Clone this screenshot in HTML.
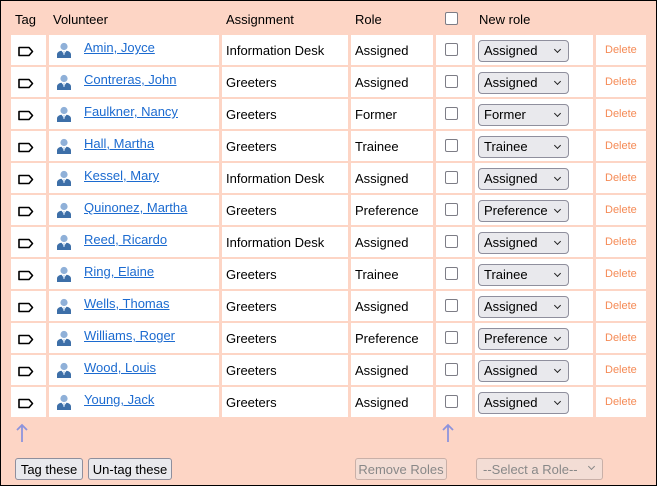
<!DOCTYPE html>
<html><head><style>
html,body{margin:0;padding:0}
body{width:655px;height:484px;border:1px solid #000;background:#fdd5c5;font-family:"Liberation Sans",Arial,sans-serif;font-size:13px;color:#000;position:relative;overflow:hidden}
table{position:absolute;left:7px;top:2px;border-collapse:separate;border-spacing:3px 2px;table-layout:fixed}
th{font-weight:normal;text-align:left;height:28px;padding:0 0 0 4px;vertical-align:middle}
td{background:#fff;height:30px;padding:0 0 0 4px;vertical-align:middle;white-space:nowrap}
a{color:#1c6bd0;text-decoration:underline}
.tag{display:block;margin-left:3px;margin-top:3px}
.vol{position:relative}
.vol svg{position:absolute;left:7px;top:7px}
.vol a{position:absolute;left:35px;top:5px}
.cb{display:inline-block;width:11px;height:11px;border:1.5px solid #7d7d86;border-radius:2px;background:#fff;margin-left:5px;margin-top:2px}
.sel{display:inline-block;box-sizing:border-box;width:91px;height:22px;border:1px solid #8f8f9d;border-radius:4px;background:#e9e9ed;padding:2px 0 0 5px;position:relative;margin-left:-1px;margin-top:2px}
.sel:after{content:"";position:absolute;right:8px;top:6px;width:4px;height:4px;border-right:1.5px solid #222;border-bottom:1.5px solid #222;transform:rotate(45deg)}
.del{color:#f58a55;font-size:11px;padding-left:9px}
.btn{position:absolute;box-sizing:border-box;height:22px;border:1px solid #8f8f9d;border-radius:3px;background:#e9e9ed;font-size:13px;padding:3px 0 0;white-space:nowrap;text-align:center}
.dis{color:#888;border-color:#c9b0a8;background:#f3ddd5}
.arr{position:absolute;top:422px}
</style></head><body>
<table>
<colgroup><col style="width:35px"><col style="width:170px"><col style="width:126px"><col style="width:82px"><col style="width:36px"><col style="width:118px"><col style="width:50px"></colgroup>
<tr><th>Tag</th><th>Volunteer</th><th>Assignment</th><th>Role</th><th><span class="cb" style="margin-left:5px"></span></th><th>New role</th><th></th></tr>
</table>
<div id="rows"></div>
<script>
var d=[["Amin, Joyce","Information Desk","Assigned"],["Contreras, John","Greeters","Assigned"],["Faulkner, Nancy","Greeters","Former"],["Hall, Martha","Greeters","Trainee"],["Kessel, Mary","Information Desk","Assigned"],["Quinonez, Martha","Greeters","Preference"],["Reed, Ricardo","Information Desk","Assigned"],["Ring, Elaine","Greeters","Trainee"],["Wells, Thomas","Greeters","Assigned"],["Williams, Roger","Greeters","Preference"],["Wood, Louis","Greeters","Assigned"],["Young, Jack","Greeters","Assigned"]];
var tag='<svg class="tag" width="16" height="11" viewBox="0 0 16 11"><path d="M1 1.5H11L14.5 5.5L11 9.5H1Z" fill="none" stroke="#000" stroke-width="1.6" stroke-linejoin="round"/></svg>';
var ppl='<svg width="16" height="16" viewBox="0 0 16 16"><circle cx="8" cy="4.5" r="3.6" fill="#8fb0d8"/><path d="M1 16V12.5C1 10 3.5 9 5.5 8.7L8 12L10.5 8.7C12.5 9 15 10 15 12.5V16Z" fill="#3d6fa8"/><path d="M7 9H9L8.5 13H7.5Z" fill="#cfe0f3"/></svg>';
var h='<table>'+'<colgroup><col style="width:35px"><col style="width:170px"><col style="width:126px"><col style="width:82px"><col style="width:36px"><col style="width:118px"><col style="width:50px"></colgroup>';
d.forEach(function(r){h+='<tr><td>'+tag+'</td><td class="vol">'+ppl+'<a>'+r[0]+'</a></td><td>'+r[1]+'</td><td>'+r[2]+'</td><td><span class="cb"></span></td><td><span class="sel">'+r[2]+'</span></td><td class="del">Delete</td></tr>';});
h+='</table>';
var e=document.getElementById('rows');e.innerHTML=h;e.firstChild.style.top='32px';
</script>
<svg class="arr" style="left:14px" width="14" height="20" viewBox="0 0 14 20"><path d="M7 19V2M2 7L7 2L12 7" fill="none" stroke="#8d93dc" stroke-width="1.8"/></svg>
<svg class="arr" style="left:440px" width="14" height="20" viewBox="0 0 14 20"><path d="M7 19V2M2 7L7 2L12 7" fill="none" stroke="#8d93dc" stroke-width="1.8"/></svg>
<div class="btn" style="left:14px;top:457px;width:68px">Tag these</div>
<div class="btn" style="left:87px;top:457px;width:84px">Un-tag these</div>
<div class="btn dis" style="left:354px;top:457px;width:92px">Remove Roles</div>
<div class="btn dis" style="left:475px;top:457px;width:127px;text-align:left;padding-left:6px">--Select a Role--<span style="position:absolute;right:8px;top:5px;width:4px;height:4px;border-right:1.5px solid #888;border-bottom:1.5px solid #888;transform:rotate(45deg)"></span></div>
</body></html>
